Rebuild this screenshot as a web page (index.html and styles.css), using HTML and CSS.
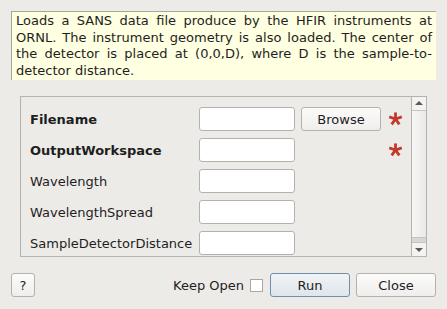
FILE: index.html
```html
<!DOCTYPE html>
<html lang="en">
<head>
    <meta charset="UTF-8">
    <title>LoadHFIRSANS</title>
    <link rel="stylesheet" href="styles.css">
</head>
<body>
    <div class="dialog">
        <div class="description">
            Loads a SANS data file produce by the HFIR instruments at ORNL. The instrument geometry is also loaded. The center of the detector is placed at (0,0,D), where D is the sample-to-detector distance.
        </div>

        <div class="props">
            <div class="props-list">
                <div class="prop-row">
                    <div class="prop-label bold">Filename</div>
                    <input class="prop-input" type="text">
                    <button class="btn browse-btn">Browse</button>
                    <span class="required">
                        <svg width="16" height="16" viewBox="0 0 16 16"><g stroke="#c0392b" stroke-width="3" stroke-linecap="butt"><line x1="8" y1="8" x2="8" y2="1"/><line x1="8" y1="8" x2="14.7" y2="5.8"/><line x1="8" y1="8" x2="12.1" y2="13.7"/><line x1="8" y1="8" x2="3.9" y2="13.7"/><line x1="8" y1="8" x2="1.3" y2="5.8"/></g></svg>
                    </span>
                </div>
                <div class="prop-row">
                    <div class="prop-label bold">OutputWorkspace</div>
                    <input class="prop-input" type="text">
                    <span></span>
                    <span class="required">
                        <svg width="16" height="16" viewBox="0 0 16 16"><g stroke="#c0392b" stroke-width="3" stroke-linecap="butt"><line x1="8" y1="8" x2="8" y2="1"/><line x1="8" y1="8" x2="14.7" y2="5.8"/><line x1="8" y1="8" x2="12.1" y2="13.7"/><line x1="8" y1="8" x2="3.9" y2="13.7"/><line x1="8" y1="8" x2="1.3" y2="5.8"/></g></svg>
                    </span>
                </div>
                <div class="prop-row">
                    <div class="prop-label">Wavelength</div>
                    <input class="prop-input" type="text">
                </div>
                <div class="prop-row">
                    <div class="prop-label">WavelengthSpread</div>
                    <input class="prop-input" type="text">
                </div>
                <div class="prop-row">
                    <div class="prop-label">SampleDetectorDistance</div>
                    <input class="prop-input" type="text">
                </div>
            </div>
            <div class="scrollbar">
                <div class="scroll-arrow up"></div>
                <div class="scroll-thumb"></div>
                <div class="scroll-track"></div>
                <div class="scroll-arrow down"></div>
            </div>
        </div>

        <div class="footer">
            <button class="btn help-btn">?</button>
            <div class="spacer"></div>
            <label class="keep-open">Keep Open <span class="checkbox"></span></label>
            <button class="btn run-btn">Run</button>
            <button class="btn close-btn">Close</button>
        </div>
    </div>
</body>
</html>
```

FILE: styles.css
```css
body {
    margin: 0;
    background: #edebe8;
    font-family: "DejaVu Sans", sans-serif;
    font-size: 13px;
    color: #1e1e1e;
}
.dialog {
    width: 447px;
    height: 309px;
    padding: 11px 11px 0 11px;
    box-sizing: border-box;
}
.description {
    height: 69px;
    box-sizing: border-box;
    background: #ffffe1;
    border-top: 1px solid #a5a5a2;
    border-left: 1px solid #a5a5a2;
    padding: 1px 4px 0 4px;
    line-height: 16.5px;
    text-align: justify;
}
.props {
    display: flex;
    margin: 16px 9px 0 9px;
    height: 161px;
    box-sizing: border-box;
    border: 1px solid #b5b3b0;
    overflow: hidden;
}
.props-list {
    flex: 1;
    padding: 10px 0 0 9px;
    display: flex;
    flex-direction: column;
    gap: 7px;
}
.prop-row {
    display: grid;
    grid-template-columns: 163px 96px 80px 16px;
    column-gap: 6px;
    align-items: center;
    height: 24px;
}
.prop-label {
    white-space: nowrap;
}
.bold {
    font-weight: bold;
}
.prop-input {
    width: 96px;
    height: 24px;
    box-sizing: border-box;
    margin: 0;
    border: 1px solid #b4b2af;
    border-radius: 3px;
    background: #fff;
}
.required {
    display: flex;
    align-items: center;
    margin-left: 1px;
}
.btn {
    font-family: "DejaVu Sans", sans-serif;
    font-size: 13px;
    color: #1e1e1e;
    height: 24px;
    margin: 0;
    padding: 0;
    border: 1px solid #b4b2af;
    border-radius: 3px;
    background: linear-gradient(#fbfbfa, #efeeec);
}
.browse-btn {
    width: 80px;
}
.scrollbar {
    width: 14px;
    border-left: 1px solid #b5b3b0;
    display: flex;
    flex-direction: column;
    background: #e3e1de;
}
.scroll-arrow {
    height: 13px;
    background: #f4f3f2;
    position: relative;
}
.scroll-arrow.up {
    border-bottom: 1px solid #c6c4c1;
}
.scroll-arrow.down {
    border-top: 1px solid #c6c4c1;
}
.scroll-arrow::after {
    content: "";
    position: absolute;
    left: 3px;
    border-left: 4px solid transparent;
    border-right: 4px solid transparent;
}
.scroll-arrow.up::after {
    top: 4px;
    border-bottom: 4px solid #5a5a5a;
}
.scroll-arrow.down::after {
    top: 5px;
    border-top: 4px solid #5a5a5a;
}
.scroll-thumb {
    height: 126px;
    background: linear-gradient(90deg, #f6f6f5, #ebe9e7);
}
.scroll-track {
    flex: 1;
    background: #d9d7d4;
    border-top: 1px solid #c6c4c1;
}
.footer {
    display: flex;
    align-items: center;
    margin-top: 16px;
    height: 24px;
}
.help-btn {
    width: 24px;
}
.spacer {
    flex: 1;
}
.keep-open {
    display: flex;
    align-items: center;
    gap: 6px;
    margin-right: 7px;
}
.checkbox {
    width: 13px;
    height: 13px;
    box-sizing: border-box;
    border: 1px solid #a9a7a4;
    background: #fff;
}
.run-btn {
    width: 80px;
    margin-right: 6px;
    border-color: #6f8fae;
    background: linear-gradient(#f1f4f7, #dfe5ea);
}
.close-btn {
    width: 80px;
}
```
